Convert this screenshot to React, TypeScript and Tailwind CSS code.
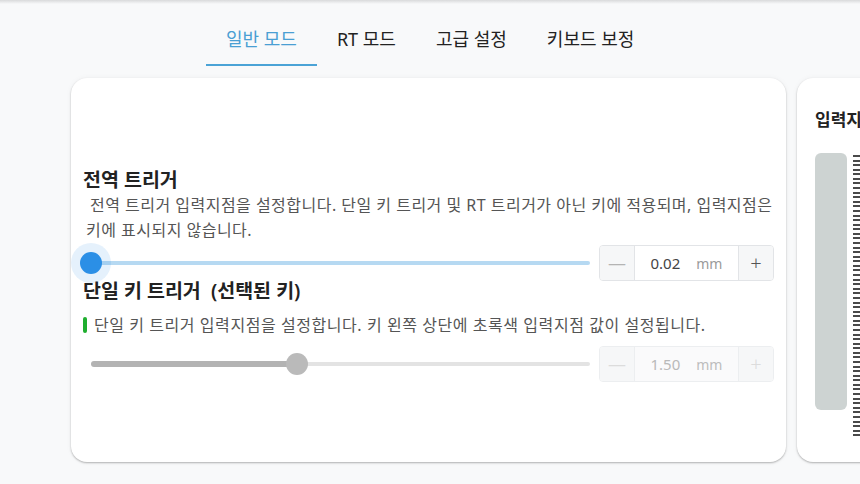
import React from "react";

const FONT = { fontFamily: '"Noto Sans", "Noto Sans CJK KR", sans-serif' };

interface StepperProps {
  value: string
  disabled?: boolean
}

interface SliderProps {
  pct: number
  active?: boolean
}

const tabs = ["일반 모드", "RT 모드", "고급 설정", "키보드 보정"];

function Stepper({ value, disabled } : StepperProps) {
  const border = disabled ? "border-[#eceef0]" : "border-[#e2e4e7]";
  return (
    <div className={`flex w-[175px] h-[36px] shrink-0 rounded-[4px] border ${border} overflow-hidden`}>
      <div className={`w-[35px] flex items-center justify-center bg-[#f6f7f8] border-r ${border} ${disabled ? "text-[#dcdcdc]" : "text-[#b4b4b4]"} text-[18px]`}>—</div>
      <div className={`flex-1 flex items-center justify-center gap-[16px] ${disabled ? "bg-[#fafafb]" : "bg-white"}`}>
        <span className={`text-[15px] ${disabled ? "text-[#b9b9b9]" : "text-[#444]"}`}>{value}</span>
        <span className={`text-[14px] ${disabled ? "text-[#bdbdbd]" : "text-[#9a9a9a]"}`}>mm</span>
      </div>
      <div className={`w-[35px] flex items-center justify-center bg-[#f6f7f8] border-l ${border} ${disabled ? "text-[#dcdcdc]" : "text-[#555]"} text-[20px] font-light`}>+</div>
    </div>
  )
}

function Slider({ pct, active } : SliderProps) {
  return (
    <div className="relative flex-1 h-[36px] flex items-center">
      {active ? (
        <div className="w-full h-[4px] rounded-full bg-[#b6d9f2]" />
      ) : (
        <div className="w-full flex items-center">
          <div className="h-[6px] rounded-l-full bg-[#b3b3b3]" style={{ width: `${pct}%` }} />
          <div className="flex-1 h-[4px] rounded-r-full bg-[#e3e3e3]" />
        </div>
      )}
      {active && (
        <div className="absolute top-1/2 w-[40px] h-[40px] -translate-x-1/2 -translate-y-1/2 rounded-full bg-[#2b8fe6]/12" style={{ left: `${pct}%` }} />
      )}
      <div
        className={`absolute top-1/2 w-[22px] h-[22px] -translate-x-1/2 -translate-y-1/2 rounded-full ${active ? "bg-[#2b8fe6]" : "bg-[#bababa]"}`}
        style={{ left: `${pct}%` }}
      />
    </div>
  )
}

function TriggerCard() {
  return (
    <div className="w-[715px] h-[384px] shrink-0 bg-white rounded-[16px] shadow-[0_1px_2px_rgba(0,0,0,0.28),0_0_6px_rgba(0,0,0,0.04)] pt-[89px] pl-[12px] pr-[10px]">
      <h2 className="text-[19.5px] font-semibold text-[#222] leading-[26px]">전역 트리거</h2>
      <p className="text-[16px] tracking-[0.03em] text-[#555] leading-[25px] indent-[4px] pl-[3px]">
        전역 트리거 입력지점을 설정합니다. 단일 키 트리거 및 RT 트리거가 아닌 키에 적용되며, 입력지점은 키에 표시되지 않습니다.
      </p>
      <div className="flex items-center gap-[9px] pl-[8px] pr-[2px] mt-[2px]">
        <Slider pct={0} active />
        <Stepper value="0.02" />
      </div>
      <h2 className="text-[19.5px] font-semibold text-[#222] leading-[24px] mt-[-2px]">단일 키 트리거 &nbsp;(선택된 키)</h2>
      <div className="flex items-center gap-[7px] mt-[10px]">
        <div className="w-[4px] h-[16px] rounded-[2px] bg-[#1fae2f]" />
        <p className="text-[16px] tracking-[0.035em] text-[#555] leading-[24px]">단일 키 트리거 입력지점을 설정합니다. 키 왼쪽 상단에 초록색 입력지점 값이 설정됩니다.</p>
      </div>
      <div className="flex items-center gap-[9px] pl-[8px] pr-[2px] mt-[9px]">
        <Slider pct={41.3} />
        <Stepper value="1.50" disabled />
      </div>
    </div>
  )
}

function InputCard() {
  return (
    <div className="w-[300px] h-[384px] shrink-0 bg-white rounded-[16px] shadow-[0_1px_2px_rgba(0,0,0,0.28),0_0_6px_rgba(0,0,0,0.04)] pt-[29px] pl-[18px]">
      <h2 className="text-[17px] font-semibold text-[#222] leading-[26px] whitespace-nowrap">입력지점 미리보기</h2>
      <div className="flex gap-[6px] mt-[20px]">
        <div className="w-[32px] h-[257px] rounded-[6px] bg-[#cdd3d2]" />
        <div className="flex flex-col justify-between h-[284px] pt-[2px]">
          {Array.from({ length: 62 }).map((_, i) => (
            <div key={i} className="w-[20px] h-[2px] bg-[#4a4a4a]" />
          ))}
        </div>
      </div>
    </div>
  )
}

export default function App() {
  return (
    <div className="w-[860px] h-[484px] overflow-hidden bg-[#f8f9fa]" style={FONT}>
      <div className="h-[4px] bg-linear-to-b from-[#d9dadb] to-[#f8f9fa]" />
      <div className="flex pl-[206px] mt-[11px]">
        {tabs.map((t, i) => (
          <div
            key={t}
            className={`h-[51px] px-[20px] flex items-center text-[18px] font-normal border-b-2 ${i === 0 ? "border-[#4ba3d6] text-[#4a9fd3]" : "border-transparent text-[#222]"}`}
          >
            {t}
          </div>
        ))}
      </div>
      <div className="flex gap-[11px] pl-[71px] mt-[12px]">
        <TriggerCard />
        <InputCard />
      </div>
    </div>
  )
}
